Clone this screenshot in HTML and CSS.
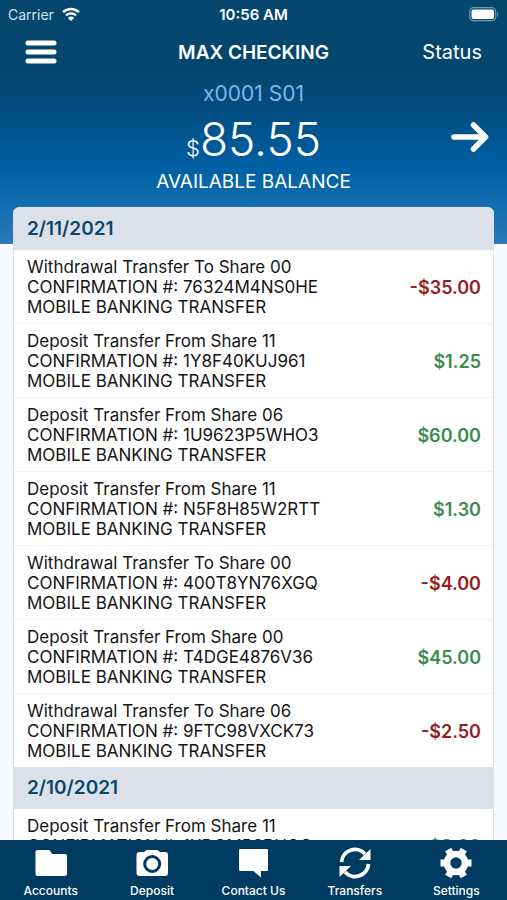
FILE: index.html
```
<!DOCTYPE html>
<html lang="en">
<head>
<meta charset="UTF-8">
<meta name="viewport" content="width=device-width,initial-scale=1">
<title>Max Checking</title>
<link rel="stylesheet" href="styles.css">
</head>
<body>
<div class="app">
  <header class="header">
    <div class="statusBar">
      <div class="carrier">
        <span>Carrier</span>
        <svg class="wifi" viewBox="0 0 18 14" fill="none" stroke="#fff" stroke-width="2.4">
          <path d="M1 5.2a11.5 11.5 0 0 1 16 0M4 8.4a7.2 7.2 0 0 1 10 0"/>
          <path d="M9 14 5.9 10.9a4.4 4.4 0 0 1 6.2 0z" fill="#fff" stroke="none"/>
        </svg>
      </div>
      <span class="clock">10:56 AM</span>
      <svg class="battery" viewBox="0 0 30 15">
        <rect x="0.7" y="0.7" width="26" height="13" rx="4" fill="none" stroke="#fff" stroke-opacity=".45" stroke-width="1.2"/>
        <rect x="2.5" y="2.5" width="22.5" height="9.5" rx="2" fill="#fff"/>
        <path d="M28.2 5v5c1.5-.6 1.5-4.4 0-5z" fill="#fff" fill-opacity=".45"/>
      </svg>
    </div>

    <nav class="navBar">
      <button class="menuBtn" aria-label="Menu">
        <svg viewBox="0 0 32 24" fill="none" stroke="#fff" stroke-width="5" stroke-linecap="round">
          <path d="M3 3h26M3 12h26M3 21h26"/>
        </svg>
      </button>
      <h1 class="title">MAX CHECKING</h1>
      <a class="statusLink" href="#">Status</a>
    </nav>

    <div class="account">
      <div class="balance">
        <p class="number">x0001 S01</p>
        <p class="amount"><span class="currency">$</span>85.55</p>
        <p class="caption">AVAILABLE BALANCE</p>
      </div>
      <button class="nextBtn" aria-label="Next account">
        <svg viewBox="0 0 38 32" fill="none" stroke="#fff" stroke-width="5.5" stroke-linecap="round" stroke-linejoin="round">
          <path d="M3 16h31M22.500 4l12 12-12 12"/>
        </svg>
      </button>
    </div>
  </header>

  <main class="content">
    <section class="card">
      <h2 class="date">2/11/2021</h2>
      <ul class="list">
        <li class="row">
          <p class="desc">Withdrawal Transfer To Share 00<br>CONFIRMATION #: 76324M4NS0HE<br>MOBILE BANKING TRANSFER</p>
          <span class="value debit">-$35.00</span>
        </li>
        <li class="row">
          <p class="desc">Deposit Transfer From Share 11<br>CONFIRMATION #: 1Y8F40KUJ961<br>MOBILE BANKING TRANSFER</p>
          <span class="value credit">$1.25</span>
        </li>
        <li class="row">
          <p class="desc">Deposit Transfer From Share 06<br>CONFIRMATION #: 1U9623P5WHO3<br>MOBILE BANKING TRANSFER</p>
          <span class="value credit">$60.00</span>
        </li>
        <li class="row">
          <p class="desc">Deposit Transfer From Share 11<br>CONFIRMATION #: N5F8H85W2RTT<br>MOBILE BANKING TRANSFER</p>
          <span class="value credit">$1.30</span>
        </li>
        <li class="row">
          <p class="desc">Withdrawal Transfer To Share 00<br>CONFIRMATION #: 400T8YN76XGQ<br>MOBILE BANKING TRANSFER</p>
          <span class="value debit">-$4.00</span>
        </li>
        <li class="row">
          <p class="desc">Deposit Transfer From Share 00<br>CONFIRMATION #: T4DGE4876V36<br>MOBILE BANKING TRANSFER</p>
          <span class="value credit">$45.00</span>
        </li>
        <li class="row">
          <p class="desc">Withdrawal Transfer To Share 06<br>CONFIRMATION #: 9FTC98VXCK73<br>MOBILE BANKING TRANSFER</p>
          <span class="value debit">-$2.50</span>
        </li>
      </ul>
      <h2 class="date">2/10/2021</h2>
      <ul class="list">
        <li class="row">
          <p class="desc">Deposit Transfer From Share 11<br>CONFIRMATION #: 1XDGMP2BUGC<br>MOBILE BANKING TRANSFER</p>
          <span class="value credit">$8.00</span>
        </li>
      </ul>
    </section>
  </main>

  <nav class="tabBar">
    <a class="tab" href="#">
      <svg viewBox="0 0 32 32" fill="#fff">
        <path d="M2.500 3h11q1.500 0 2.500 2l1 2h13q2 0 2 2v18q0 2-2 2H2.500q-2 0-2-2V5q0-2 2-2z"/>
      </svg>
      <span>Accounts</span>
    </a>
    <a class="tab" href="#">
      <svg viewBox="0 0 32 32" fill="#fff">
        <path fill-rule="evenodd" d="M11 3h10q1.500 0 2.200 1.500L24 5h5q3 0 3 3v18q0 3-3 3H3.500q-3 0-3-3V8q0-3 3-3H8l.8-.5Q9.500 3 11 3zM16.200 8a9 9 0 1 0 0 18 9 9 0 0 0 0-18zm0 3a6 6 0 1 1 0 12 6 6 0 0 1 0-12z"/>
      </svg>
      <span>Deposit</span>
    </a>
    <a class="tab" href="#">
      <svg viewBox="0 0 32 32" fill="#fff">
        <path d="M3 2h27q1 0 1 1v20q0 1-1 1h-6v6.500L16.500 24H3q-1 0-1-1V3q0-1 1-1z"/>
      </svg>
      <span>Contact Us</span>
    </a>
    <a class="tab" href="#">
      <svg viewBox="0 0 32 32">
        <path d="M2.500 15a13.500 13.500 0 0 1 23.500-8M29.500 17a13.500 13.500 0 0 1-23.500 8" fill="none" stroke="#fff" stroke-width="3.800"/>
        <path d="M31.500 2v11H20zM.5 30V19H12z" fill="#fff"/>
      </svg>
      <span>Transfers</span>
    </a>
    <a class="tab" href="#">
      <svg viewBox="0 0 32 32">
        <g stroke="#fff" stroke-width="7">
          <path d="M0.500 16h7M24.500 16h7M8.200 2.600l3.800 6.500M20 22.900l3.800 6.500M23.800 2.600L20 9.100M12 22.900l-3.800 6.500"/>
        </g>
        <circle cx="16" cy="16" r="9" fill="none" stroke="#fff" stroke-width="6.500"/>
      </svg>
      <span>Settings</span>
    </a>
  </nav>
</div>
</body>
</html>
```
FILE: styles.css
```
* {
  box-sizing: border-box;
}

body {
  margin: 0;
  font-family: Inter, "Liberation Sans", sans-serif;
  color: #151515;
  background: #f7fbfe;
}

h1, h2, p, ul {
  margin: 0;
  padding: 0;
}

button {
  padding: 0;
  border: none;
  background: none;
  cursor: pointer;
}

a {
  color: #fff;
  text-decoration: none;
}

svg {
  display: block;
}

.app {
  display: flex;
  flex-direction: column;
  height: 100vh;
  overflow: hidden;
}

/* Header */
.header {
  flex: none;
  padding-bottom: 46px;
  color: #fff;
  background: linear-gradient(#05466f 0, #05466f 32%, #00528b 52%, #0061a4 70%, #2a7ab8 100%);
}

.statusBar {
  display: grid;
  grid-template-columns: 1fr auto 1fr;
  align-items: center;
  height: 28px;
  padding: 0 8px;
  font-size: 14px;
}

.carrier {
  display: flex;
  align-items: center;
  gap: 8px;
  color: #d5e3ed;
}

.wifi {
  width: 18px;
  height: 14px;
}

.clock {
  font-size: 15px;
  font-weight: 600;
}

.battery {
  width: 30px;
  height: 15px;
  justify-self: end;
}

.navBar {
  display: grid;
  grid-template-columns: 1fr auto 1fr;
  align-items: center;
  height: 48px;
  padding: 0 25px;
}

.menuBtn svg {
  width: 32px;
  height: 24px;
}

.title {
  font-size: 19px;
  font-weight: 600;
}

.statusLink {
  justify-self: end;
  font-size: 20px;
}

.account {
  display: grid;
  grid-template-columns: 1fr auto 1fr;
  align-items: center;
  padding: 0 18px;
}

.balance {
  grid-column: 2;
  text-align: center;
}

.number {
  font-size: 21px;
  line-height: 36px;
  color: #78b9ea;
}

.amount {
  font-size: 46px;
  font-weight: 300;
  line-height: 54px;
}

.currency {
  font-size: 22px;
  line-height: 1;
}

.caption {
  font-size: 19px;
  line-height: 32px;
}

.nextBtn {
  justify-self: end;
}

.nextBtn svg {
  width: 38px;
  height: 32px;
}

/* Transactions */
.content {
  flex: 1;
  min-height: 0;
  padding: 0 13px;
}

/* pulled up over the header */
.card {
  margin-top: -37px;
  border: 1px solid #dce1e9;
  border-radius: 6px;
  background: #fff;
  overflow: hidden;
}

.date {
  padding: 0 13px;
  font-size: 19px;
  font-weight: 600;
  line-height: 42px;
  color: #0a456d;
  background: #dce1e9;
}

.list {
  list-style: none;
}

.row {
  display: flex;
  align-items: center;
  justify-content: space-between;
  padding: 7px 12px 6px 13px;
  border-bottom: 1px solid #f1f3f6;
}

.row:last-child {
  border-bottom: none;
}

.desc {
  font-size: 17px;
  line-height: 20px;
}

.value {
  font-size: 18px;
  font-weight: 600;
}

.debit {
  color: #981b1e;
}

.credit {
  color: #3b8a4d;
}

/* Bottom tabs */
.tabBar {
  position: relative;
  flex: none;
  display: grid;
  grid-template-columns: repeat(5, 1fr);
  height: 60px;
  padding-top: 7px;
  background: #003b62;
}

.tab {
  display: flex;
  flex-direction: column;
  align-items: center;
  gap: 4px;
  font-size: 12px;
  font-weight: 500;
  line-height: 16px;
}

.tab svg {
  width: 32px;
  height: 32px;
}
```
